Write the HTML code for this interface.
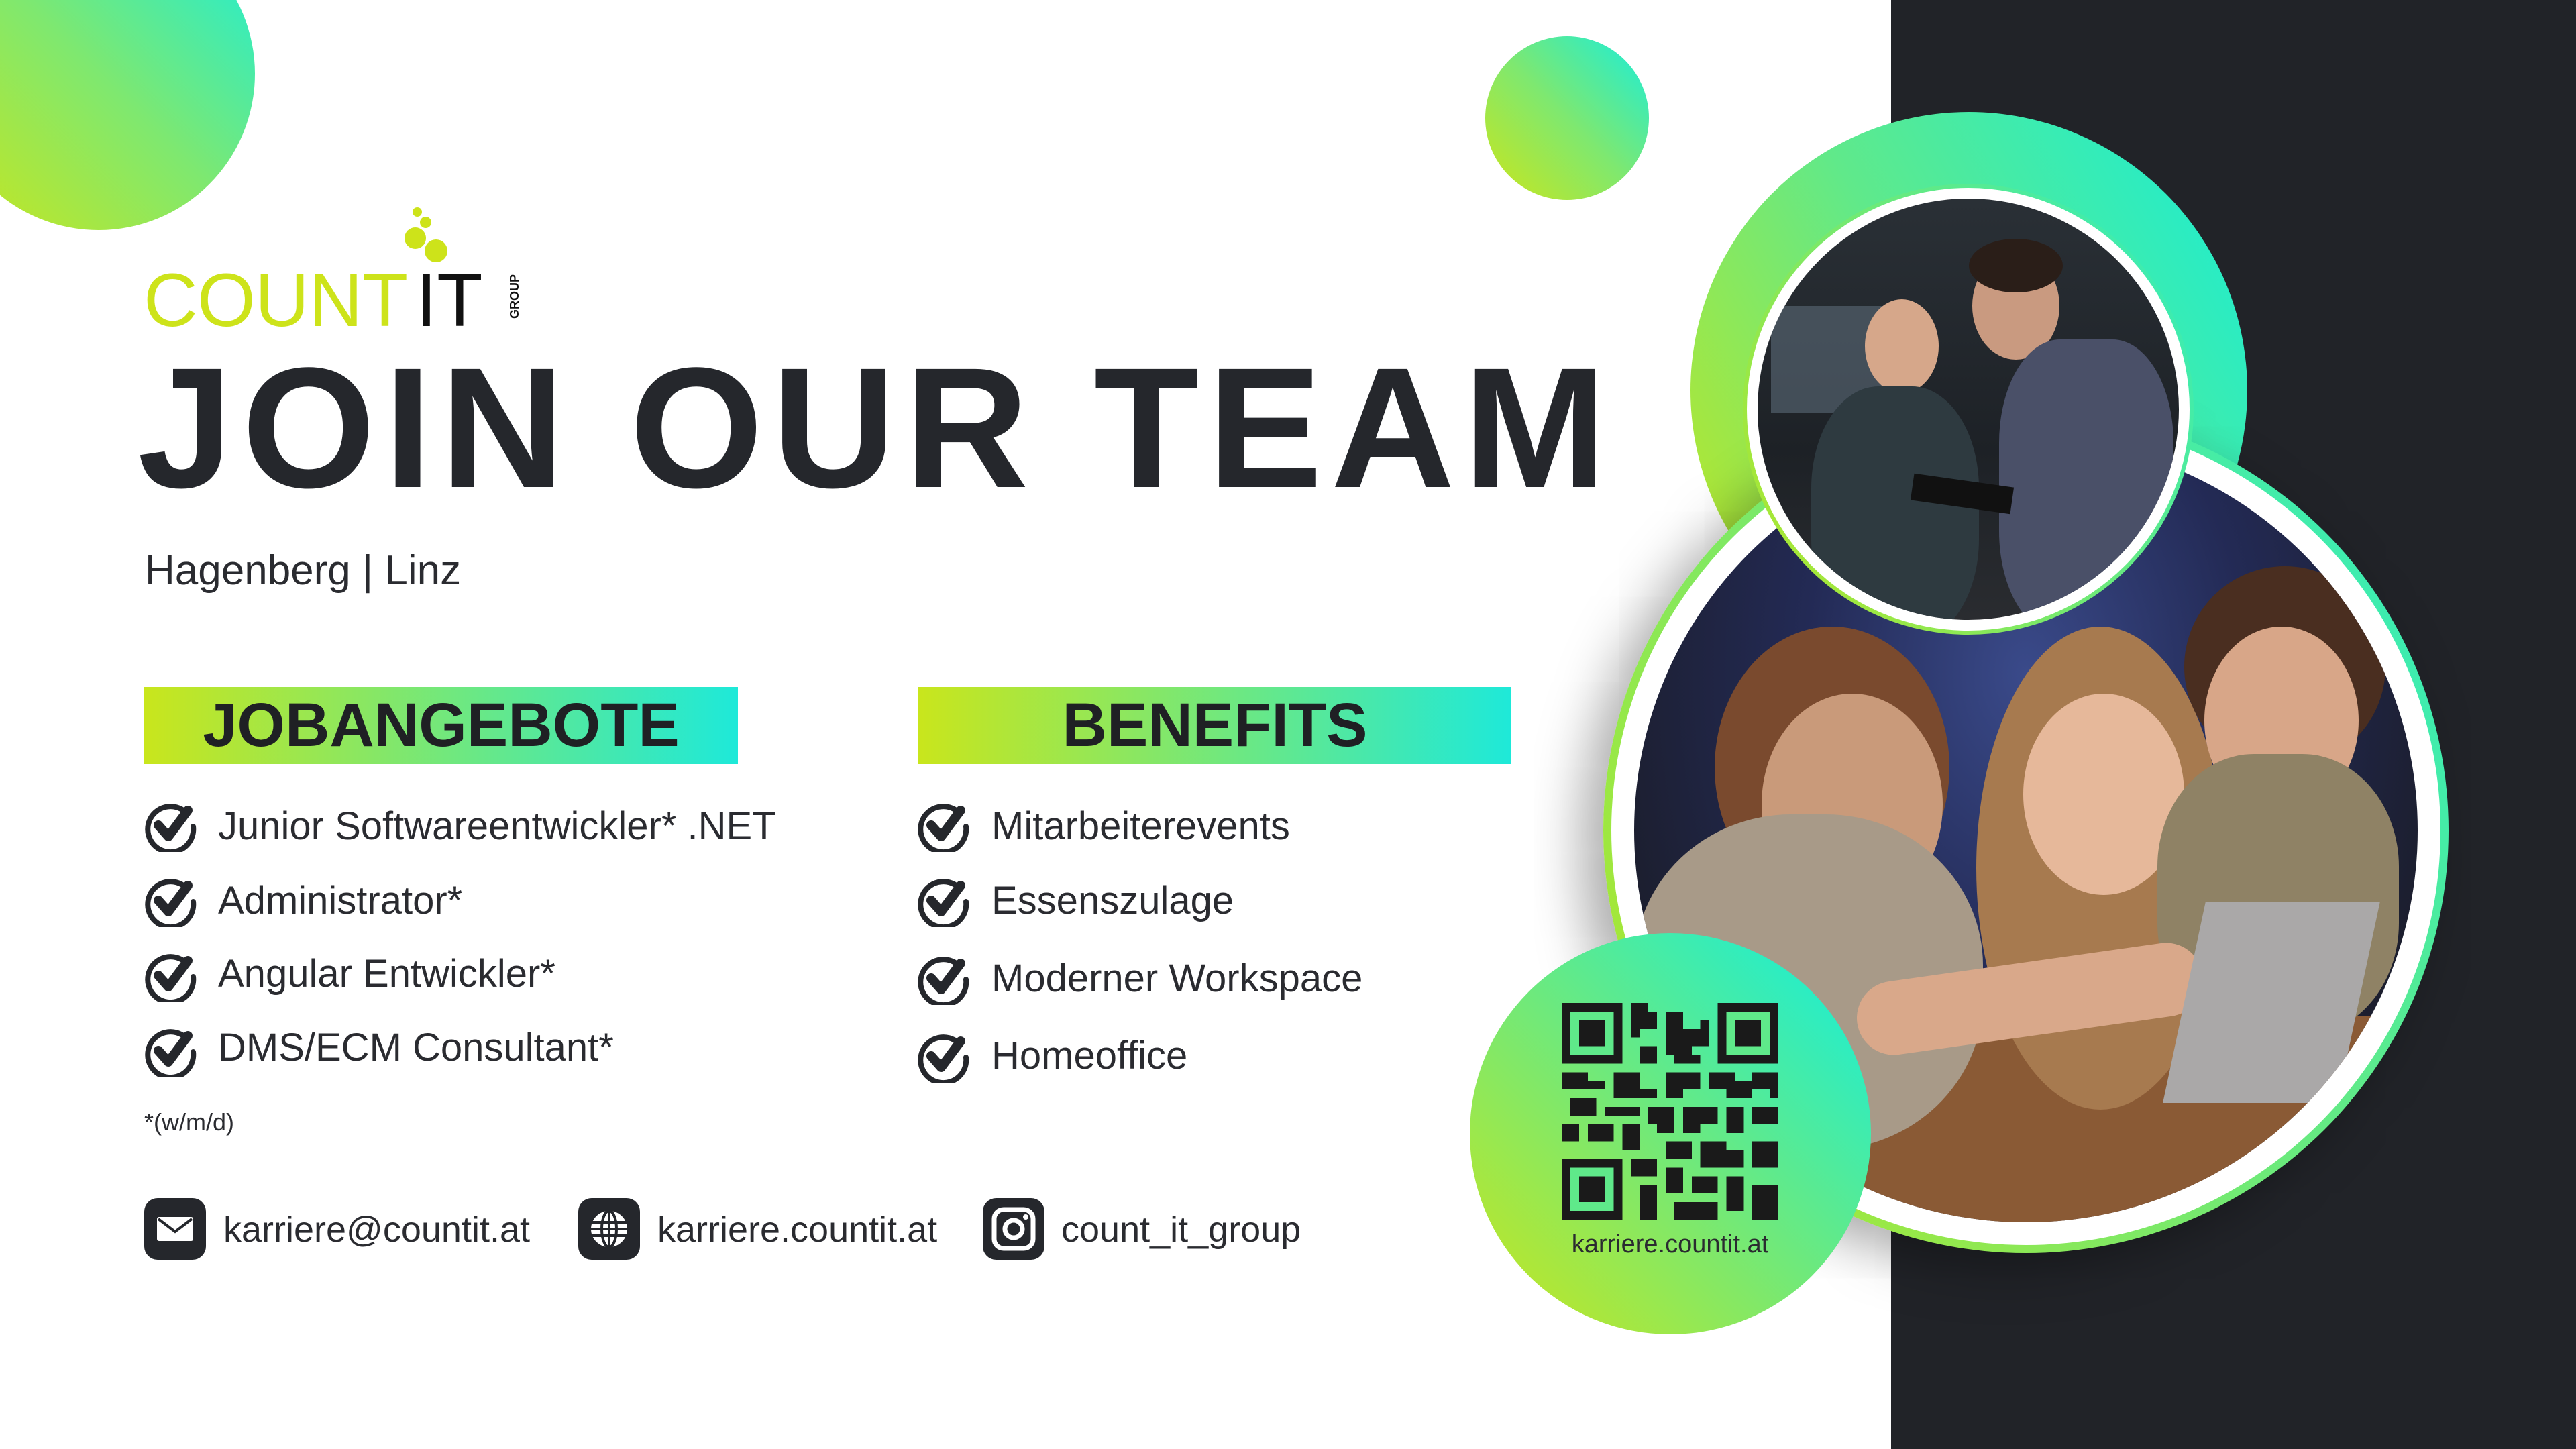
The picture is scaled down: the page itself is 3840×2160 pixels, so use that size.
<!DOCTYPE html>
<html><head><meta charset="utf-8"><style>
*{margin:0;padding:0;box-sizing:border-box}
body{width:3840px;height:2160px;overflow:hidden;background:#fff;position:relative;font-family:"Liberation Sans",sans-serif;color:#2a2b30}
.a{position:absolute}
.g{background:linear-gradient(45deg,#cbe61a 0%,#7ee870 50%,#17eedd 100%)}
.circ{border-radius:50%}
.t{position:absolute;white-space:nowrap;font-size:58px;line-height:1}
.chk{position:absolute;width:80px;height:80px}
.ic{position:absolute;width:92px;height:92px;background:#25272c;border-radius:20px}
</style></head><body>
<div class="a" style="left:2819px;top:0;width:1021px;height:2160px;background:#212328"></div>
<div class="a circ g" style="left:-86px;top:-123px;width:466px;height:466px"></div>
<div class="a circ g" style="left:2214px;top:54px;width:244px;height:244px"></div>

<!-- logo -->
<div class="t" style="left:214px;top:392px;font-size:112px;color:#cde31a;letter-spacing:-1px">COUNT</div>
<div class="t" style="left:620px;top:392px;font-size:112px;color:#111">IT</div>
<div class="t" style="left:758px;top:475px;font-size:18px;font-weight:bold;color:#111;transform:rotate(-90deg);transform-origin:0 0">GROUP</div>
<div class="a circ" style="left:615px;top:309px;width:14px;height:14px;background:#cde31a"></div>
<div class="a circ" style="left:626px;top:323px;width:17px;height:17px;background:#cde31a"></div>
<div class="a circ" style="left:603px;top:339px;width:32px;height:32px;background:#cde31a"></div>
<div class="a circ" style="left:633px;top:357px;width:34px;height:34px;background:#cde31a"></div>

<div class="t" style="left:205px;top:510px;font-size:256px;font-weight:bold;letter-spacing:13px;color:#25272c">JOIN OUR TEAM</div>
<div class="t" style="left:216px;top:820px;font-size:62px">Hagenberg | Linz</div>

<div class="a g" style="left:215px;top:1024px;width:885px;height:115px;background:linear-gradient(90deg,#c9e61c,#1ee9d9)"></div>
<div class="t" style="left:215px;top:1035px;width:885px;text-align:center;font-size:92px;font-weight:bold;color:#1f2024">JOBANGEBOTE</div>
<div class="a g" style="left:1369px;top:1024px;width:884px;height:115px;background:linear-gradient(90deg,#c9e61c,#1ee9d9)"></div>
<div class="t" style="left:1369px;top:1035px;width:884px;text-align:center;font-size:92px;font-weight:bold;color:#1f2024">BENEFITS</div>

<svg width="0" height="0" style="position:absolute"><defs><g id="ck"><path d="M62 20 A34 34 0 1 0 74 42" fill="none" stroke="#25272c" stroke-width="8" stroke-linecap="round"/><path d="M22 40 L37 57 L66 18" fill="none" stroke="#25272c" stroke-width="14" stroke-linecap="round" stroke-linejoin="round"/></g></defs></svg>
<svg class="chk" style="left:214px;top:1190px" viewBox="0 0 80 80"><use href="#ck"/></svg>
<svg class="chk" style="left:214px;top:1302px" viewBox="0 0 80 80"><use href="#ck"/></svg>
<svg class="chk" style="left:214px;top:1414px" viewBox="0 0 80 80"><use href="#ck"/></svg>
<svg class="chk" style="left:214px;top:1526px" viewBox="0 0 80 80"><use href="#ck"/></svg>
<div class="t" style="left:325px;top:1203px">Junior Softwareentwickler* .NET</div>
<div class="t" style="left:325px;top:1314px">Administrator*</div>
<div class="t" style="left:325px;top:1423px">Angular Entwickler*</div>
<div class="t" style="left:325px;top:1533px">DMS/ECM Consultant*</div>
<div class="t" style="left:215px;top:1655px;font-size:36px">*(w/m/d)</div>

<svg class="chk" style="left:1366px;top:1190px" viewBox="0 0 80 80"><use href="#ck"/></svg>
<svg class="chk" style="left:1366px;top:1302px" viewBox="0 0 80 80"><use href="#ck"/></svg>
<svg class="chk" style="left:1366px;top:1418px" viewBox="0 0 80 80"><use href="#ck"/></svg>
<svg class="chk" style="left:1366px;top:1534px" viewBox="0 0 80 80"><use href="#ck"/></svg>
<div class="t" style="left:1478px;top:1203px">Mitarbeiterevents</div>
<div class="t" style="left:1478px;top:1314px">Essenszulage</div>
<div class="t" style="left:1478px;top:1430px">Moderner Workspace</div>
<div class="t" style="left:1478px;top:1545px">Homeoffice</div>

<div class="ic" style="left:215px;top:1786px"><svg width="92" height="92" viewBox="0 0 92 92"><rect x="19" y="28" width="54" height="36" rx="3" fill="#fff"/><path d="M21 31 L46 50 L71 31" fill="none" stroke="#25272c" stroke-width="4"/></svg></div>
<div class="t" style="left:333px;top:1806px;font-size:54px">karriere@countit.at</div>
<div class="ic" style="left:862px;top:1786px"><svg width="92" height="92" viewBox="0 0 92 92"><circle cx="46" cy="46" r="27" fill="#fff"/><g stroke="#25272c" stroke-width="4" fill="none"><ellipse cx="46" cy="46" rx="11" ry="27"/><line x1="46" y1="19" x2="46" y2="73"/><line x1="19" y1="36" x2="73" y2="36"/><line x1="19" y1="56" x2="73" y2="56"/><line x1="19" y1="46" x2="73" y2="46"/></g></svg></div>
<div class="t" style="left:980px;top:1806px;font-size:54px">karriere.countit.at</div>
<div class="ic" style="left:1465px;top:1786px"><svg width="92" height="92" viewBox="0 0 92 92"><rect x="17" y="17" width="58" height="58" rx="14" fill="none" stroke="#fff" stroke-width="7"/><circle cx="46" cy="46" r="13" fill="none" stroke="#fff" stroke-width="7"/><circle cx="64" cy="28" r="4" fill="#fff"/></svg></div>
<div class="t" style="left:1582px;top:1806px;font-size:54px">count_it_group</div>

<!-- right photos -->
<div class="a circ g" style="left:2520px;top:167px;width:830px;height:830px;background:linear-gradient(60deg,#c6e61c,#60e98a 50%,#16eed8)"></div>
<div class="a circ" style="left:2390px;top:608px;width:1260px;height:1260px;background:linear-gradient(60deg,#b8e622,#2bedc5);box-shadow:-30px 20px 80px rgba(0,0,0,.35)"></div>
<div class="a circ" style="left:2402px;top:620px;width:1236px;height:1236px;background:#fff"></div>
<div class="a circ" style="left:2436px;top:654px;width:1168px;height:1168px;overflow:hidden;background:radial-gradient(ellipse at 50% 30%,#3a4a8a 0%,#232a55 40%,#1b1d2a 80%)">
  <div class="a" style="left:0;top:860px;width:1168px;height:320px;background:#8a5a35"></div>
  <div class="a circ" style="left:120px;top:280px;width:350px;height:420px;background:#7a4a2e"></div>
  <div class="a circ" style="left:190px;top:380px;width:270px;height:330px;background:#c99a7a"></div>
  <div class="a" style="left:0;top:560px;width:520px;height:500px;border-radius:45%;background:#a89a88"></div>
  <div class="a circ" style="left:510px;top:280px;width:370px;height:720px;background:#a77a4f"></div>
  <div class="a circ" style="left:580px;top:380px;width:240px;height:300px;background:#e6b89a"></div>
  <div class="a circ" style="left:820px;top:190px;width:300px;height:300px;background:#4a2e20"></div>
  <div class="a circ" style="left:850px;top:280px;width:230px;height:280px;background:#d8a688"></div>
  <div class="a" style="left:780px;top:470px;width:360px;height:420px;border-radius:40%;background:#8f8265"></div>
  <div class="a" style="left:330px;top:780px;width:520px;height:110px;border-radius:55px;background:#d9a88a;transform:rotate(-8deg)"></div>
  <div class="a" style="left:820px;top:690px;width:260px;height:300px;background:#aaa8a8;transform:skew(-12deg)"></div>
</div>
<div class="a circ" style="left:2598px;top:274px;width:672px;height:672px;background:linear-gradient(60deg,#b8e622,#2bedc5)"></div>
<div class="a circ" style="left:2604px;top:280px;width:660px;height:660px;background:#fff"></div>
<div class="a circ" style="left:2620px;top:296px;width:628px;height:628px;overflow:hidden;background:linear-gradient(180deg,#2a3036,#1d2126 60%,#2a2c30)">
  <div class="a" style="left:20px;top:160px;width:180px;height:160px;background:#5c6a78;opacity:.6"></div>
  <div class="a circ" style="left:160px;top:150px;width:110px;height:140px;background:#d6a78a"></div>
  <div class="a" style="left:80px;top:280px;width:250px;height:380px;border-radius:40%;background:#2e3a40"></div>
  <div class="a circ" style="left:320px;top:80px;width:130px;height:160px;background:#c99a80"></div>
  <div class="a circ" style="left:315px;top:60px;width:140px;height:80px;background:#2a1e18"></div>
  <div class="a" style="left:360px;top:210px;width:260px;height:440px;border-radius:35%;background:#4a5068"></div>
  <div class="a" style="left:230px;top:420px;width:150px;height:40px;background:#111;transform:rotate(8deg)"></div>
</div>

<div class="a circ g" style="left:2191px;top:1391px;width:598px;height:598px;background:linear-gradient(45deg,#cbe61a,#6ee97c 50%,#10efe0)"></div>
<svg class="a" style="left:2328px;top:1495px" width="323" height="323" viewBox="0 0 25 25" shape-rendering="crispEdges">
<g fill="#1a1a1a">
<rect x="0" y="0" width="7" height="7"/><rect x="18" y="0" width="7" height="7"/><rect x="0" y="18" width="7" height="7"/>
</g>
<g fill="#5fe98a"><rect x="1" y="1" width="5" height="5"/><rect x="19" y="1" width="5" height="5"/><rect x="1" y="19" width="5" height="5"/></g>
<g fill="#1a1a1a"><rect x="2" y="2" width="3" height="3"/><rect x="20" y="2" width="3" height="3"/><rect x="2" y="20" width="3" height="3"/>
<path d="M8 0h2v1h1v2h-2v1h-1zM12 1h2v2h2v-1h1v3h-2v1h-3zM9 5h2v2h-2zM13 6h3v1h-3zM0 8h3v1h2v1h-5zM6 8h3v2h2v1h-5zM12 8h4v2h-2v1h-2zM17 8h3v1h2v2h-3v-1h-2zM22 8h3v3h-1v-1h-2zM1 11h3v2h-3zM5 12h4v1h-4zM10 12h3v3h-2v-1h-1zM14 12h4v2h-2v1h-2zM19 12h2v3h-2zM22 12h3v2h-3zM0 14h2v2h-2zM3 14h3v2h-3zM7 14h2v3h-2zM12 16h3v2h-3zM16 16h3v1h2v2h-5zM22 16h3v3h-3zM8 18h3v2h-3zM12 19h2v3h-2zM15 20h3v2h-3zM19 20h2v4h-2zM22 21h3v4h-3zM9 21h2v4h-2zM13 23h5v2h-5zM8 10h1v1h-1z"/></g>
</svg>
<div class="t" style="left:2328px;top:1836px;width:323px;text-align:center;font-size:38px;color:#2a2b30">karriere.countit.at</div>
</body></html>
